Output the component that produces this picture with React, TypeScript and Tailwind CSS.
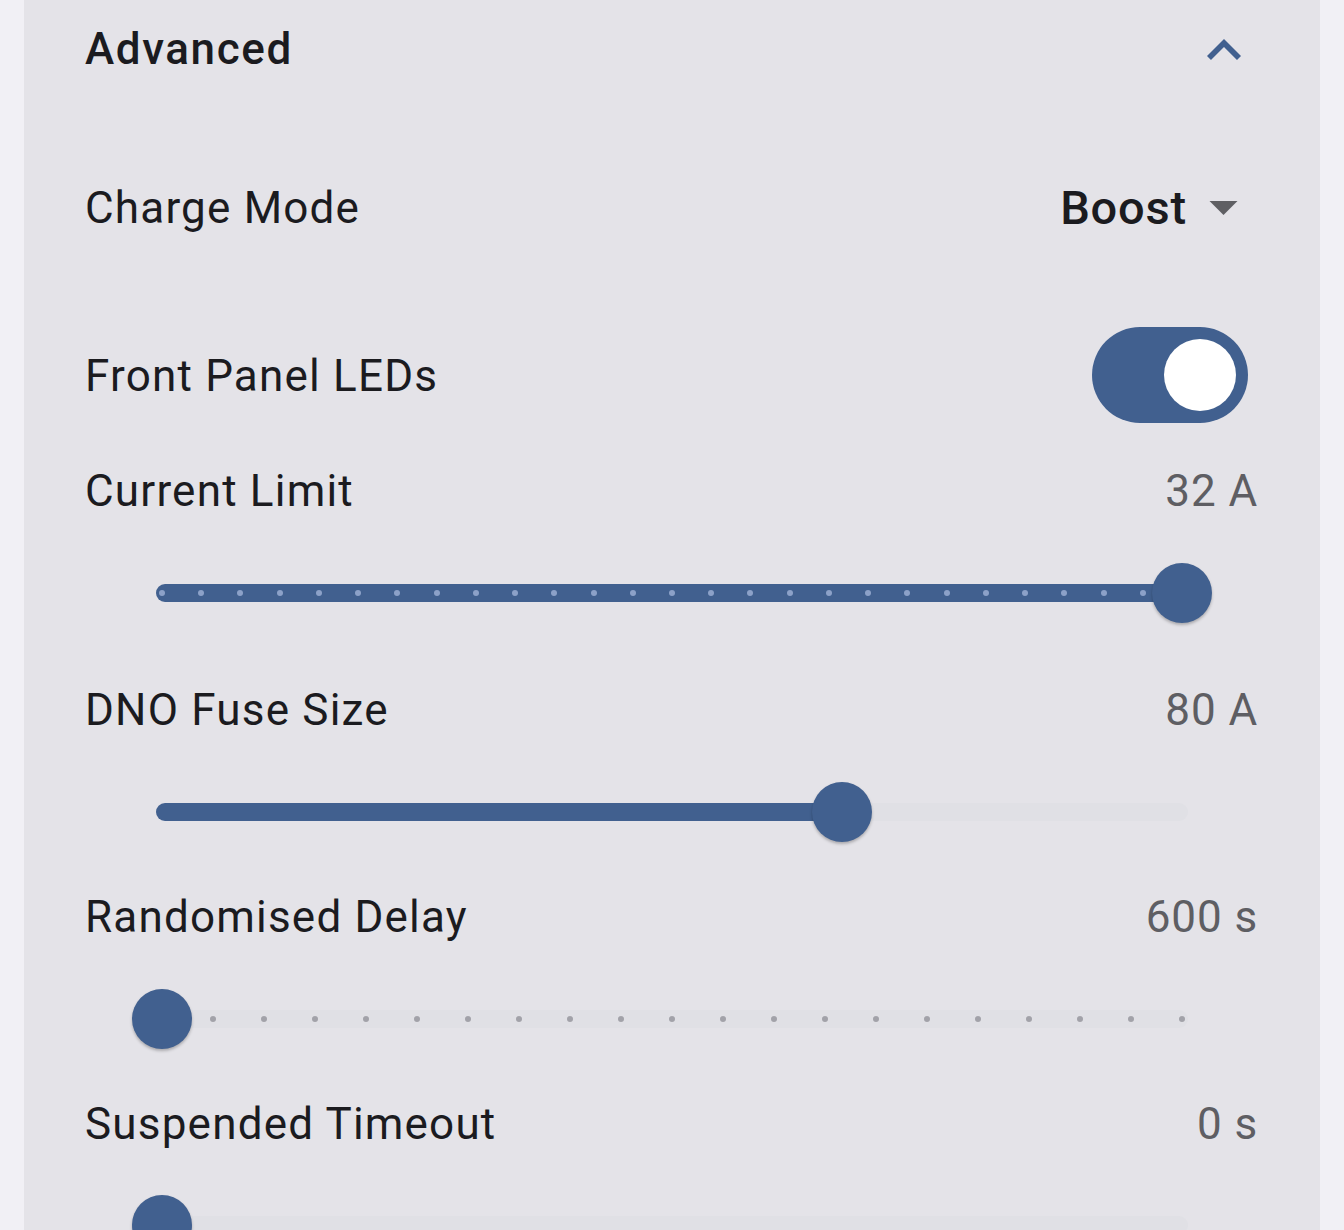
import React from "react";

const BLUE = "#41608f";

function Thumb({ left }: { left: number }) {
  return (
    <div
      className="absolute top-1/2 h-[60px] w-[60px] -translate-x-1/2 -translate-y-1/2 rounded-full bg-[#41608f] shadow-[0_2px_3px_rgba(0,0,0,0.25)]"
      style={{ left: `${left}%` }}
    />
  );
}

function Slider({
  value,
  steps,
  activeDots,
}: {
  value: number;
  steps?: number;
  activeDots?: boolean;
}) {
  const pct = value * 100;
  const dots: number[] = [];
  if (steps) for (let i = 0; i <= steps; i++) dots.push((i / steps) * 100);
  return (
    <div className="relative mx-[76px] h-[60px]">
      <div className="absolute left-[-6px] right-[-6px] top-1/2 h-[18px] -translate-y-1/2 rounded-full bg-[#e0e0e5]" />
      {value > 0 && (
        <div
          className="absolute left-[-6px] top-1/2 h-[18px] -translate-y-1/2 rounded-full bg-[#41608f]"
          style={{ width: `calc(${pct}% + 6px)` }}
        />
      )}
      {dots.map((d, i) => (
        <div
          key={i}
          className={
            "absolute top-1/2 h-[6px] w-[6px] -translate-x-1/2 -translate-y-1/2 rounded-full " +
            (activeDots && d <= pct ? "bg-[#8ca1c8]" : "bg-[#a2a2a9]")
          }
          style={{ left: `${d}%` }}
        />
      ))}
      <Thumb left={pct} />
    </div>
  );
}

function LabelRow({ label, value }: { label: string; value: string }) {
  return (
    <div className="flex h-[60px] items-center justify-between pt-[2px]">
      <span className="-ml-[1px] text-[44px] tracking-[1.2px] text-[#1b1b1f]">{label}</span>
      <span className="text-[44px] tracking-[0.9px] text-[#5e5e63]">{value}</span>
    </div>
  );
}

export default function App() {
  return (
    <div
      className="h-[1230px] w-[1344px] overflow-hidden bg-[#f1f0f5] pl-[24px] pr-[24px]"
      style={{ fontFamily: "Roboto, 'Noto Sans', sans-serif" }}
    >
      <div className="h-full bg-[#e4e3e8] pl-[62px] pr-[62px]">
        {/* header */}
        <div className="flex h-[96px] items-center justify-between pt-[2px]">
          <span className="-ml-[1px] text-[44px] font-medium tracking-[1.6px] text-[#1b1b1f]">Advanced</span>
          <svg width="34" height="21" viewBox="6 8 12 7.41" className="mr-[17px] mt-[1px]">
            <path d="M7.41 15.41 12 10.83l4.59 4.58L18 14l-6-6-6 6z" fill={BLUE} />
          </svg>
        </div>

        {/* charge mode */}
        <div className="mt-[63px] flex h-[96px] items-center justify-between pt-[2px]">
          <span className="-ml-[1px] text-[44px] tracking-[1.2px] text-[#1b1b1f]">Charge Mode</span>
          <div className="flex items-center">
            <span className="text-[47px] font-medium tracking-[0.8px] text-[#1b1b1f]">Boost</span>
            <svg width="29" height="14" viewBox="7 10 10 5" className="ml-[22px] mr-[20px]">
              <path d="M7 10l5 5 5-5z" fill="#5f5f63" />
            </svg>
          </div>
        </div>

        {/* front panel leds */}
        <div className="mt-[72px] flex h-[96px] items-center justify-between">
          <span className="-ml-[1px] mt-[2px] text-[44px] tracking-[1.2px] text-[#1b1b1f]">Front Panel LEDs</span>
          <div className="mr-[10px] flex h-[96px] w-[156px] items-center justify-end rounded-full bg-[#41608f] pr-[12px]">
            <div className="h-[72px] w-[72px] rounded-full bg-white" />
          </div>
        </div>

        <div className="mt-[37px]">
          <LabelRow label="Current Limit" value="32 A" />
        </div>
        <div className="mt-[43px]">
          <Slider value={1} steps={26} activeDots />
        </div>

        <div className="mt-[56px]">
          <LabelRow label="DNO Fuse Size" value="80 A" />
        </div>
        <div className="mt-[43px]">
          <Slider value={0.6667} />
        </div>

        <div className="mt-[44px]">
          <LabelRow label="Randomised Delay" value="600 s" />
        </div>
        <div className="mt-[43px]">
          <Slider value={0} steps={20} />
        </div>

        <div className="mt-[44px]">
          <LabelRow label="Suspended Timeout" value="0 s" />
        </div>
        <div className="mt-[42px]">
          <Slider value={0} />
        </div>
      </div>
    </div>
  );
}
